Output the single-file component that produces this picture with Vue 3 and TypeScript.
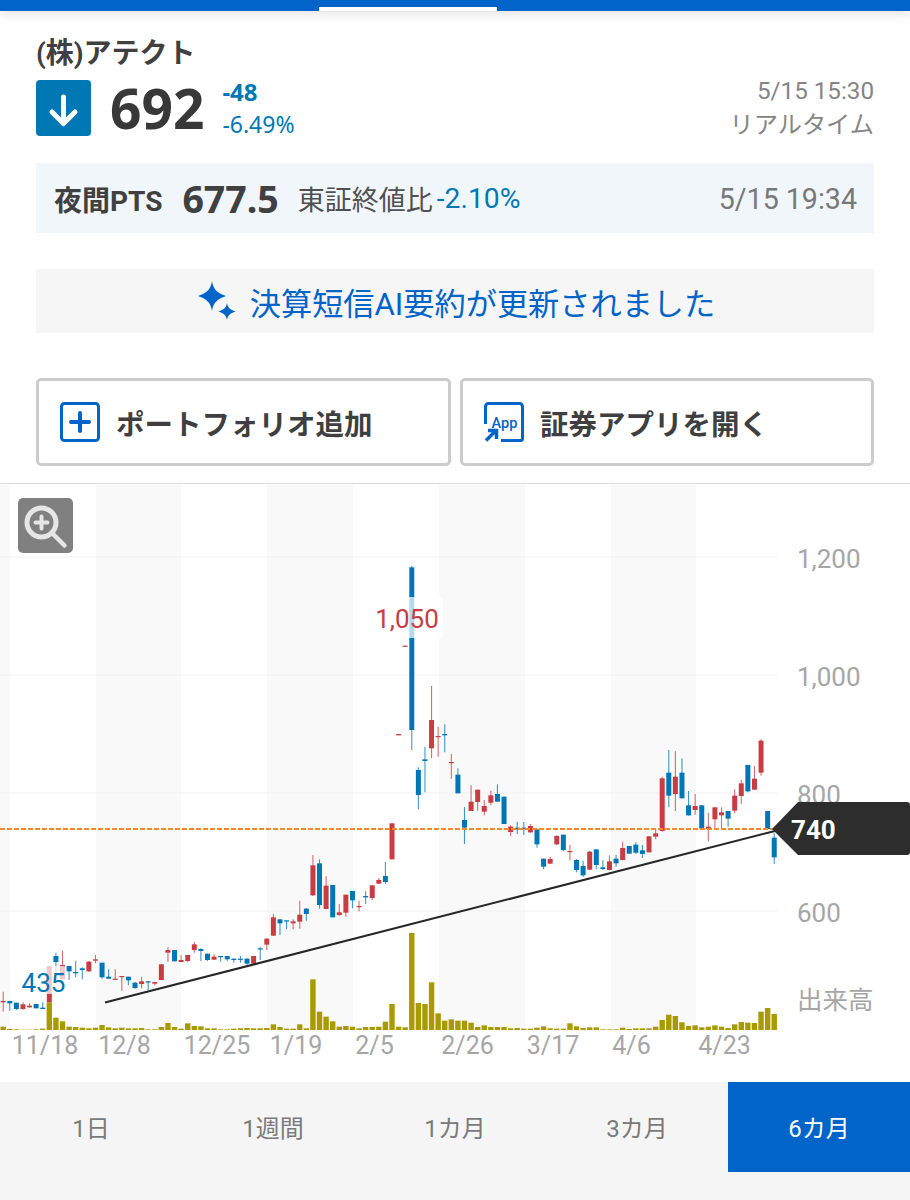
<script setup lang="ts">
type Row = [number, number, number, number, number, number];

const tabs = ['1日', '1週間', '1カ月', '3カ月', '6カ月'];
const priceLabels = [
  { text: '1,200', y: 558 },
  { text: '1,000', y: 676 },
  { text: '800', y: 794 },
  { text: '600', y: 912 },
];
const dateLabels = [
  { text: '11/18', x: 45 },
  { text: '12/8', x: 124.5 },
  { text: '12/25', x: 217 },
  { text: '1/19', x: 296 },
  { text: '2/5', x: 374.5 },
  { text: '2/26', x: 467.5 },
  { text: '3/17', x: 553 },
  { text: '4/6', x: 631.5 },
  { text: '4/23', x: 724.5 },
];
const stripes = [
  [0, 10],
  [96, 85],
  [267, 86],
  [439, 86],
  [611, 85],
];
const gridLines = [557, 675, 793, 911];

// values are read off 3x crops: [up, wickTop, bodyTop, bodyBottom, wickBottom]
const scale = (origin: number, v: number) => origin + v / 3;
const fromCrop = (origin: number, rows: number[][]): Row[] =>
  rows.map((r) => [r[0], scale(origin, r[1]), scale(origin, r[2]), scale(origin, r[3]), scale(origin, r[4]), 0]);

const rows: Row[] = [
  ...fromCrop(860, [
    [1, 395, 423, 427, 455], [0, 422, 423, 430, 452], [0, 428, 428, 447, 450], [1, 427, 433, 447, 449],
    [1, 430, 437, 442, 443], [0, 432, 432, 445, 445], [0, 427, 443, 447, 447], [1, 318, 318, 427, 430],
    [0, 278, 288, 306, 370], [1, 272, 315, 358, 358], [0, 318, 318, 334, 360], [0, 302, 336, 340, 352],
    [0, 322, 325, 330, 358], [1, 303, 305, 334, 336], [1, 285, 298, 302, 310], [0, 308, 308, 352, 356],
    [0, 328, 350, 356, 356], [1, 328, 356, 359, 360], [1, 348, 348, 351, 392], [0, 350, 350, 361, 376],
    [0, 366, 368, 384, 386], [1, 350, 364, 372, 385], [0, 364, 364, 367, 390], [1, 366, 366, 371, 376],
    [1, 313, 313, 360, 360], [1, 262, 270, 278, 305], [0, 270, 270, 304, 304], [1, 285, 300, 306, 306],
    [1, 285, 285, 303, 306], [1, 245, 253, 270, 278], [0, 265, 267, 273, 303], [0, 281, 281, 300, 303],
    [1, 283, 290, 299, 300], [0, 288, 288, 291, 305], [0, 288, 288, 298, 303], [0, 296, 296, 300, 308],
    [0, 288, 296, 299, 308], [0, 295, 296, 311, 314], [1, 288, 288, 311, 311], [0, 260, 265, 268, 300],
    [1, 234, 236, 254, 270],
  ]),
  ...fromCrop(780, [
    [1, 402, 412, 467, 468], [0, 418, 418, 430, 465], [0, 421, 421, 424, 447], [1, 418, 424, 430, 448],
    [1, 362, 404, 425, 446], [0, 384, 386, 402, 422], [1, 225, 256, 346, 348], [0, 238, 250, 375, 386],
    [1, 289, 317, 387, 388], [0, 315, 315, 412, 412], [1, 372, 397, 405, 407], [1, 344, 344, 398, 410],
    [0, 333, 333, 361, 385], [1, 362, 378, 381, 394], [0, 334, 348, 352, 372], [1, 316, 316, 354, 360],
    [1, 294, 300, 311, 311], [0, 246, 288, 306, 311], [1, 130, 130, 238, 238],
  ]),
  ...fromCrop(550, [
    [1, 552, 552, 556, 556], [1, 287, 287, 290, 290], [0, 47, 52, 540, 600], [0, 652, 660, 735, 778],
    [0, 590, 628, 633, 727], [1, 408, 510, 595, 625], [1, 530, 558, 561, 620], [0, 523, 552, 556, 607],
    [1, 612, 636, 638, 687], [0, 655, 674, 730, 730], [0, 771, 810, 833, 882], [1, 706, 755, 783, 783],
    [1, 719, 719, 756, 782], [1, 750, 768, 785, 796], [1, 722, 736, 758, 766], [0, 703, 732, 755, 755],
    [0, 740, 740, 822, 822], [1, 826, 830, 846, 858], [0, 815, 833, 838, 852],
  ]),
  ...fromCrop(730, [
    [0, 276, 293, 297, 315], [1, 282, 288, 307, 308], [0, 298, 298, 343, 353], [0, 386, 386, 410, 418],
    [1, 380, 387, 401, 401], [1, 316, 318, 343, 345], [0, 314, 314, 360, 364], [1, 345, 363, 365, 391],
    [0, 387, 390, 420, 427], [0, 392, 408, 436, 440], [1, 362, 365, 419, 420], [0, 358, 358, 405, 418],
    [0, 390, 412, 417, 420], [1, 376, 394, 420, 421], [0, 375, 386, 400, 410], [1, 335, 354, 390, 391],
    [0, 348, 348, 371, 371], [0, 337, 344, 368, 372], [0, 345, 361, 372, 384], [1, 319, 319, 367, 367],
    [1, 298, 310, 320, 328], [1, 140, 145, 303, 305], [0, 60, 128, 197, 232], [1, 64, 140, 192, 243],
    [0, 85, 128, 205, 205], [0, 183, 226, 256, 257], [1, 192, 228, 240, 254], [0, 226, 226, 296, 296],
    [1, 248, 290, 297, 334], [1, 232, 232, 268, 296], [1, 232, 247, 256, 296], [0, 243, 243, 266, 290],
    [1, 178, 197, 242, 250], [1, 150, 160, 198, 222], [0, 105, 105, 184, 187], [1, 108, 146, 179, 180],
    [1, 28, 32, 128, 137], [0, 243, 243, 297, 297], [0, 310, 323, 382, 402],
  ]),
];

const candles = rows.map((r, i) => ({
  x: 3.2 + 6.59 * i,
  color: r[0] ? '#c83c44' : '#0076b6',
  wickTop: r[1],
  wickBottom: r[4],
  top: r[2],
  height: Math.max(r[3] - r[2], 1.2),
}));

// volume bar tops, same 3x crops (baseline y = 1030)
const volumeTops = [
  ...[500, 507, 508, 509, 509, 508, 506, 427, 473, 484, 500, 501, 503, 505, 503, 495, 502, 505, 503, 505, 505, 504, 508, 508,
    501, 489, 501, 506, 490, 498, 499, 505, 505, 508, 508, 506, 505, 504, 505, 505, 504, 493, 501, 506, 506].map((v) => scale(860, v)),
  ...[733, 745, 598, 695, 710, 724, 740, 738, 740, 745, 741, 741, 740, 725, 672, 740, 742, 459, 669, 672, 607, 700, 722, 718,
    722, 722, 728, 741, 736, 741, 741, 741, 745, 744].map((v) => scale(780, v)),
  ...[896, 896, 893, 889, 895, 896, 896, 880, 889, 894, 892, 892, 898, 898, 898, 893, 897, 895, 895, 895, 890, 870, 854, 858,
    877, 888, 886, 892, 890, 886, 890, 894, 883, 876, 878, 879, 845, 834, 852].map((v) => scale(730, v)),
];
const volumes = volumeTops.map((top, i) => ({
  x: 3.2 + 6.59 * i - 2.7,
  y: top,
  height: 1030 - top,
}));
</script>

<template>
  <div class="page">
    <div class="top-bar"><span class="top-indicator"></span></div>

    <section class="quote">
      <h1 class="name">(株)アテクト</h1>
      <div class="price-row">
        <span class="down-box">
          <svg width="55" height="56" viewBox="0 0 55 56">
            <path d="M27.500 17v25M16 32l11.500 11.500L39 32" fill="none" stroke="#fff" stroke-width="5" stroke-linecap="round" stroke-linejoin="round" />
          </svg>
        </span>
        <span class="price">692</span>
        <div class="change">
          <span class="change-abs">-48</span>
          <span class="change-pct">-6.49%</span>
        </div>
        <div class="time">
          <span>5/15 15:30</span>
          <span class="time-kind">リアルタイム</span>
        </div>
      </div>

      <div class="pts">
        <span class="pts-label">夜間PTS</span>
        <span class="pts-price">677.5</span>
        <span class="pts-note">東証終値比</span>
        <span class="pts-pct">-2.10%</span>
        <span class="pts-time">5/15 19:34</span>
      </div>

      <div class="ai-banner">
        <svg width="40" height="40" viewBox="0 0 40 40">
          <path d="M15 0c1.200 8 4.800 12 14 15-9.200 3-12.800 7-14 15-1.200-8-4.800-12-14-15C10.200 12 13.800 8 15 0z" fill="#0064c8" />
          <path d="M30 22c.8 4.600 3 6.800 8.500 8.500C33 32.200 30.800 34.400 30 39c-.8-4.600-3-6.800-8.500-8.500C27 28.800 29.200 26.600 30 22z" fill="#0064c8" />
        </svg>
        <span>決算短信AI要約が更新されました</span>
      </div>

      <div class="actions">
        <button class="action">
          <svg width="40" height="40" viewBox="0 0 40 40">
            <rect x="1.500" y="1.500" width="37" height="37" rx="3" fill="none" stroke="#0064c8" stroke-width="3" />
            <path d="M20 11v18M11 20h18" stroke="#0064c8" stroke-width="4" stroke-linecap="round" />
          </svg>
          <span>ポートフォリオ追加</span>
        </button>
        <button class="action">
          <svg width="40" height="40" viewBox="0 0 40 40">
            <path d="M1.500 22V4.500a3 3 0 0 1 3-3h31a3 3 0 0 1 3 3v32a2 2 0 0 1-2 2H17" fill="none" stroke="#0064c8" stroke-width="3" />
            <text x="7.500" y="26" class="app-text">App</text>
            <path d="M2 38.500l9-9M4 28.500h8.500V37" fill="none" stroke="#0064c8" stroke-width="3.500" />
          </svg>
          <span>証券アプリを開く</span>
        </button>
      </div>
    </section>

    <div class="chart">
      <svg class="chart-svg" width="910" height="598" viewBox="0 484 910 598">
        <rect v-for="s in stripes" :key="s[0]" :x="s[0]" y="485" :width="s[1]" height="545" fill="#f9f9f9" />
        <line v-for="y in gridLines" :key="y" x1="0" x2="778" :y1="y" :y2="y" stroke="#f2f2f2" stroke-width="1.200" />

        <g v-for="(c, i) in candles" :key="i">
          <line :x1="c.x" :x2="c.x" :y1="c.wickTop" :y2="c.wickBottom" :stroke="c.color" stroke-width="1.100" stroke-opacity="0.75" />
          <rect :x="c.x - 2.500" :y="c.top" width="5" :height="c.height" :fill="c.color" />
        </g>
        <rect v-for="(v, i) in volumes" :key="i" :x="v.x" :y="v.y" width="5.400" :height="v.height" fill="#a89a00" />

        <rect x="22" y="966" width="44" height="28" rx="3" fill="#fff" fill-opacity="0.72" />
        <rect x="376" y="597" width="67" height="41" rx="3" fill="#fff" fill-opacity="0.72" />
        <text x="43.500" y="992" class="mark mark-low">435</text>
        <text x="407" y="628" class="mark mark-high">1,050</text>

        <line x1="0" x2="778" y1="829" y2="829" stroke="#f78a24" stroke-width="1.800" stroke-dasharray="5 2" />
        <line x1="105" y1="1002.500" x2="775" y2="831" stroke="#262626" stroke-width="2" />

        <text v-for="p in priceLabels" :key="p.text" x="797" :y="p.y + 9.500" class="axis">{{ p.text }}</text>
        <text x="797" y="1009" class="axis axis-jp">出来高</text>
        <text v-for="d in dateLabels" :key="d.text" :x="d.x" y="1054" class="axis axis-date">{{ d.text }}</text>

        <path d="M772 829l26-27h109a3 3 0 0 1 3 3v47a3 3 0 0 1-3 3H798z" fill="#2d2d2d" />
        <text x="791" y="839" class="tag-text">740</text>
      </svg>

      <div class="zoom-btn">
        <svg width="55" height="55" viewBox="0 0 55 55">
          <circle cx="23.500" cy="24.500" r="14.500" fill="none" stroke="#e6e6e6" stroke-width="5" />
          <path d="M34.500 35.500l12 12" stroke="#e6e6e6" stroke-width="4.500" stroke-linecap="round" />
          <path d="M23.500 18.500v12M17.500 24.500h12" stroke="#e6e6e6" stroke-width="4" stroke-linecap="round" />
        </svg>
      </div>
    </div>

    <nav class="tabs">
      <button v-for="(t, i) in tabs" :key="t" class="tab" :class="{ active: i === tabs.length - 1 }">{{ t }}</button>
    </nav>
  </div>
</template>

<style scoped>
.page {
  width: 910px;
  height: 1200px;
  display: flex;
  flex-direction: column;
  background: #fff;
  overflow: hidden;
  font-family: Roboto, "Noto Sans CJK JP", sans-serif;
  color: #3a3a3a;
}

.top-bar {
  height: 11px;
  flex: none;
  position: relative;
  background: #0064c8;
  box-shadow: 0 2px 12px rgba(0, 0, 0, 0.14);
}

.top-indicator {
  position: absolute;
  left: 319px;
  bottom: 0;
  width: 178px;
  height: 4px;
  background: #fff;
}

.quote {
  padding: 0 36px;
  flex: none;
  height: 473px;
  box-sizing: border-box;
  border-bottom: 1px solid #dcdcdc;
}

.name {
  margin: 25px 0 0;
  height: 36px;
  font-family: Roboto, "Noto Sans CJK JP", sans-serif;
  font-size: 28px;
  line-height: 36px;
  font-weight: 700;
  color: #404040;
}

.price-row {
  display: flex;
  align-items: center;
  height: 56px;
  margin-top: 8px;
}

.down-box {
  width: 55px;
  height: 56px;
  display: block;
  border-radius: 4px;
  background: #0078b4;
}

.price {
  margin-left: 19px;
  font-family: "Noto Sans", sans-serif;
  font-size: 55px;
  line-height: 56px;
  font-weight: 700;
  color: #383838;
}

.change {
  display: flex;
  flex-direction: column;
  margin-left: 18px;
  color: #0078b4;
  font-family: "Noto Sans", sans-serif;
}

.change-abs {
  font-size: 24px;
  line-height: 32px;
  font-weight: 700;
  margin-top: -1px;
}

.change-pct {
  font-size: 23px;
  line-height: 32px;
}

.time {
  margin-left: auto;
  display: flex;
  flex-direction: column;
  align-items: flex-end;
  font-size: 24.2px;
  line-height: 34.5px;
  color: #858585;
}

.pts {
  display: flex;
  align-items: center;
  height: 70px;
  margin-top: 27px;
  padding: 1px 17px 0 18px;
  box-sizing: border-box;
  background: #f1f6fb;
}

.pts-label {
  font-size: 28px;
  font-weight: 700;
  color: #404040;
}

.pts-price {
  margin-left: 20px;
  font-family: "Noto Sans", sans-serif;
  font-size: 37.5px;
  font-weight: 700;
  color: #404040;
}

.pts-note {
  margin-left: 19px;
  font-size: 27px;
  color: #505050;
}

.pts-pct {
  margin-left: 4px;
  font-size: 28.3px;
  color: #0078b4;
}

.pts-time {
  margin-left: auto;
  font-size: 28.6px;
  color: #787878;
}

.ai-banner {
  display: flex;
  align-items: center;
  justify-content: center;
  gap: 13px;
  height: 64px;
  margin-top: 36px;
  padding-left: 2px;
  box-sizing: border-box;
  background: #f6f6f6;
  font-size: 31.2px;
  color: #0064c8;
}

.actions {
  display: grid;
  grid-template-columns: 415px 414px;
  gap: 9px;
  margin-top: 45px;
}

.action {
  display: flex;
  align-items: center;
  gap: 16px;
  height: 88px;
  padding: 0 0 0 21px;
  box-sizing: border-box;
  border: 3px solid #cccccc;
  border-radius: 5px;
  background: #fff;
  font: 700 28.5px Roboto, "Noto Sans CJK JP", sans-serif;
  color: #3f3f3f;
}

.app-text {
  font: 500 14.5px Roboto, sans-serif;
  fill: #0064c8;
}

.chart {
  position: relative;
  height: 598px;
  flex: none;
}

.chart-svg {
  display: block;
}

.mark {
  font: 400 26px Roboto, sans-serif;
  text-anchor: middle;
}

.mark-low {
  fill: #0078b4;
}

.mark-high {
  fill: #c83c44;
}

.axis {
  font: 400 26px Roboto, "Noto Sans CJK JP", sans-serif;
  fill: #a6a6a6;
}

.axis-jp {
  font-size: 25.500px;
}

.axis-date {
  font-size: 25px;
  text-anchor: middle;
}

.tag-text {
  font: 700 26px Roboto, sans-serif;
  fill: #fff;
}

.zoom-btn {
  position: absolute;
  left: 18px;
  top: 14px;
  width: 55px;
  height: 55px;
  border-radius: 5px;
  background: #808080;
}

.tabs {
  flex: 1;
  display: grid;
  grid-template-columns: repeat(5, 1fr);
  align-items: start;
  background: #f5f5f5;
}

.tab {
  height: 90px;
  padding-bottom: 2px;
  border: 0;
  background: transparent;
  font: 400 24px Roboto, "Noto Sans CJK JP", sans-serif;
  color: #7a7a7a;
}

.tab.active {
  background: #0064c8;
  color: #fff;
}
</style>

<style>
body {
  background: #fff;
}
</style>
